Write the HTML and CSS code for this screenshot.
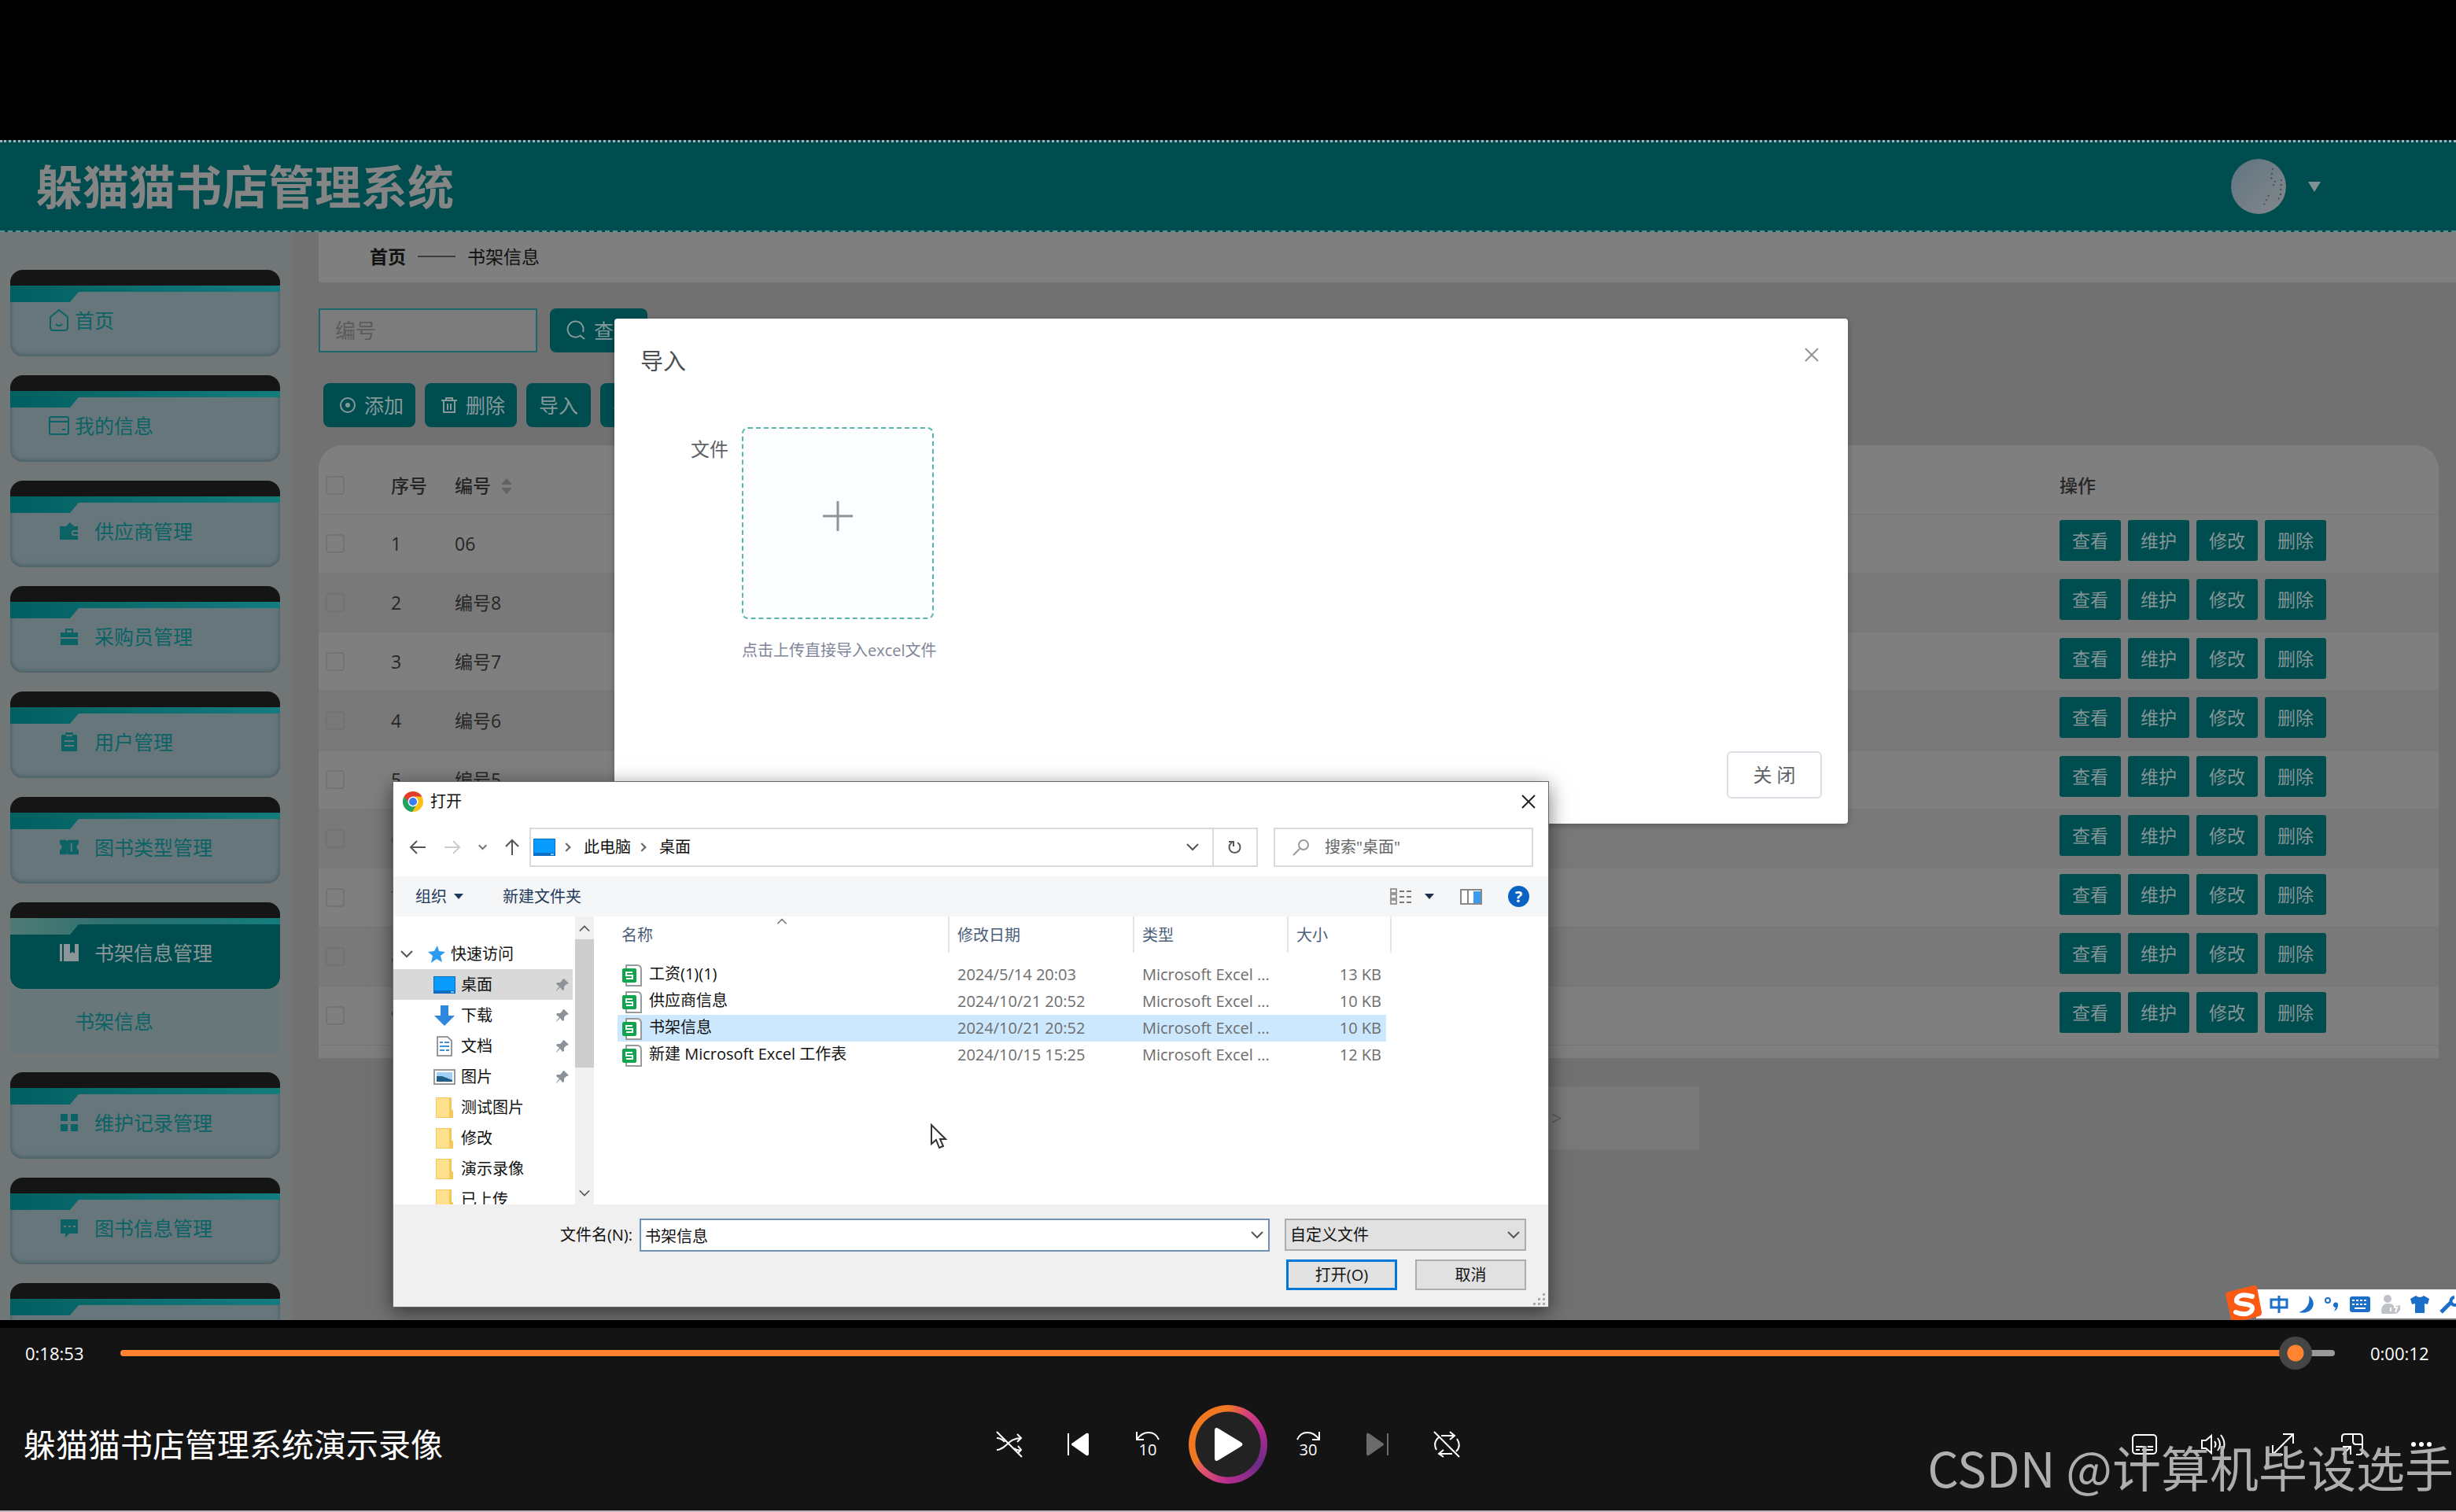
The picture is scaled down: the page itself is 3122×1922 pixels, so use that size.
FILE: index.html
```html
<!DOCTYPE html>
<html lang="zh-CN">
<head>
<meta charset="utf-8">
<title>躲猫猫书店管理系统演示录像</title>
<link rel="stylesheet" href="styles.css">
</head>
<body>
<svg class="defs" aria-hidden="true">
  <symbol id="i-desktop" viewBox="0 0 28 22"><path fill="#0a6fc4" d="M0 0h28v22H0z"/><path fill="#0a9bff" d="M1 1h26v17H1z"/><path fill="#7cc6ff" d="M22 19h4v2h-4z"/></symbol>
  <symbol id="i-pin" viewBox="0 0 18 18"><path fill="#8b929a" d="M11 1l6 6-2 1-1 0-3 3 0 4-2 1-3-4-5 5 0-1 4-5-4-3 1-2 4 0 3-3 0-1z"/></symbol>
  <symbol id="i-folder" viewBox="0 0 24 28"><path fill="#f2c75c" d="M1 1h20v15l2 2v9H1z"/><path fill="#ffe08c" d="M2 2h16v24H2z"/></symbol>
  <symbol id="i-xls" viewBox="0 0 26 28"><path fill="#fff" stroke="#9a9a9a" stroke-width="2" d="M5 1h14q5 0 5 6v20H5z"/><rect y="5" width="18" height="18" rx="2" fill="#12a34f"/><path fill="none" stroke="#fff" stroke-width="2" d="M13 10H5v4h8v4H5"/></symbol>
  <symbol id="i-down" viewBox="0 0 16 10"><path fill="none" stroke="#555" stroke-width="2" d="M1 1l7 7 7-7"/></symbol>
</svg>

<main class="stage">
  <div class="screen">
    <header class="topbar">
      <h1>躲猫猫书店管理系统</h1>
      <button class="account" aria-label="账户">
        <svg width="70" height="70" viewBox="0 0 70 70"><defs><linearGradient id="av" x1="0" y1="0" x2="1" y2="1"><stop offset="0" stop-color="#5f7480"/><stop offset="1" stop-color="#84888c"/></linearGradient></defs><circle cx="35" cy="35" r="35" fill="url(#av)"/><path stroke="#44525c" stroke-width="2" stroke-dasharray="2 4" fill="none" d="M53 12l-2 12 6 6-4 4M64 26l-1 20-4 8M48 46l-6 12"/></svg>
        <svg width="16" height="13" viewBox="0 0 16 13"><path fill="#7f9090" d="M0 0h16L8 13z"/></svg>
      </button>
    </header>

    <div class="app">
      <nav class="sidebar">
        <a class="card top" href="#"><i class="tab"></i><span><svg width="28" height="30" viewBox="0 0 28 30"><path d="M3 11L14 2l11 9v13q0 4-4 4H7q-4 0-4-4zM10 20q4 4 8 0" fill="none" stroke="currentColor" stroke-width="2"/></svg>首页</span></a>
        <a class="card top" href="#"><i class="tab"></i><span><svg width="28" height="26" viewBox="0 0 28 26"><path d="M2 8V4q0-2 2-2h20q2 0 2 2v4M2 8h24v14q0 2-2 2H4q-2 0-2-2zM18 18h4" fill="none" stroke="currentColor" stroke-width="2"/></svg>我的信息</span></a>
        <a class="card" href="#"><i class="tab"></i><span><svg width="24" height="24" viewBox="0 0 24 24"><path fill="currentColor" d="M0 6h8l5-5 5 5h5v5h-6a4 4 0 000 7h6v5H0zM17 13h6v3h-6z"/></svg>供应商管理</span></a>
        <a class="card" href="#"><i class="tab"></i><span><svg width="24" height="24" viewBox="0 0 24 24"><path fill="currentColor" d="M1 7h6V2h10v5h6v6H1zM9 7h6V4H9zM1 15h22v8H1z" fill-rule="evenodd"/></svg>采购员管理</span></a>
        <a class="card" href="#"><i class="tab"></i><span><svg width="24" height="24" viewBox="0 0 24 24"><path fill="currentColor" fill-rule="evenodd" d="M2 3h5V0h10v3h5v21H2zM8 5h8V3H8zM6 10h12v2H6zM6 16h12v2H6z"/></svg>用户管理</span></a>
        <a class="card" href="#"><i class="tab"></i><span><svg width="24" height="22" viewBox="0 0 26 22"><path fill="currentColor" d="M0 1h9l1 2 1-2h15v5a5 5 0 000 9v6H11l-1-2-1 2H0v-6a5 5 0 000-9zM15 5v12h2V5z" fill-rule="evenodd"/></svg>图书类型管理</span></a>
        <div class="group">
          <a class="card active" href="#"><i class="tab"></i><span><svg width="24" height="24" viewBox="0 0 24 24"><path fill="currentColor" d="M0 1h3v22H0zM5 1h8v12l3-2 3 2V1h5v22H5z"/></svg>书架信息管理</span></a>
          <a class="sub" href="#">书架信息</a>
        </div>
        <a class="card" href="#"><i class="tab"></i><span><svg width="24" height="24" viewBox="0 0 24 24"><path fill="currentColor" d="M1 1h9v9H1zM14 1h9v9h-9zM1 14h9v9H1zM14 14h9v9h-9z"/></svg>维护记录管理</span></a>
        <a class="card" href="#"><i class="tab"></i><span><svg width="24" height="24" viewBox="0 0 24 24"><path fill="currentColor" fill-rule="evenodd" d="M1 1h22v18H12l-5 5v-5H1zM5 9h3v2H5zM11 9h3v2h-3zM17 9h3v2h-3z"/></svg>图书信息管理</span></a>
        <a class="card" href="#" aria-label="更多"><i class="tab"></i></a>
      </nav>

      <section class="content">
        <div class="crumbs"><b>首页</b><i></i><span>书架信息</span></div>
        <div class="work">
          <form class="search">
            <input type="text" placeholder="编号" aria-label="编号">
            <button type="button" class="btn query"><svg width="26" height="26" viewBox="0 0 26 26"><path fill="none" stroke="currentColor" stroke-width="2" d="M18 20a10 10 0 114-5M18 19l6 5"/></svg>查询</button>
          </form>
          <div class="actions">
            <button class="btn"><svg width="22" height="22" viewBox="0 0 22 22"><circle cx="11" cy="11" r="9" fill="none" stroke="currentColor" stroke-width="2"/><circle cx="11" cy="11" r="3" fill="currentColor"/></svg>添加</button>
            <button class="btn"><svg width="22" height="22" viewBox="0 0 22 22"><path fill="none" stroke="currentColor" stroke-width="2" d="M1 5h20M7 5V2h8v3M4 5v15h14V5M9 9v8M13 9v8"/></svg>删除</button>
            <button class="btn">导入</button>
            <button class="btn">导出</button>
          </div>
          <div class="panel">
            <table class="grid">
              <colgroup><col class="c1"><col class="c2"><col><col class="c4"></colgroup>
              <thead><tr><th><input type="checkbox" aria-label="全选"></th><th>序号</th><th>编号<svg width="16" height="22" viewBox="0 0 16 22"><path fill="#626262" d="M1 9h14L8 1zM1 13h14l-7 8z"/></svg></th><th>操作</th></tr></thead>
              <tbody id="rows"></tbody>
            </table>
          </div>
          <div class="pager"><button aria-label="下一页">&gt;</button></div>
        </div>
      </section>
    </div>

    <section class="modal" role="dialog" aria-label="导入">
      <div class="modal-head"><h2>导入</h2><button aria-label="关闭"><svg width="18" height="18" viewBox="0 0 18 18"><path stroke="#909399" stroke-width="2" d="M1 1l16 16M17 1L1 17"/></svg></button></div>
      <div class="modal-body">
        <span class="label">文件</span>
        <div class="upload-col">
          <button class="upload" aria-label="上传文件"><svg width="38" height="38" viewBox="0 0 38 38"><path stroke="#8c939d" stroke-width="3" d="M0 19h38M19 0v38"/></svg></button>
          <p>点击上传直接导入excel文件</p>
        </div>
      </div>
      <div class="modal-foot"><button>关 闭</button></div>
    </section>

    <section class="dialog" role="dialog" aria-label="打开">
      <div class="title"><svg width="28" height="28" viewBox="0 0 28 28"><circle cx="14" cy="14" r="13" fill="#fbc116"/><path fill="#e33b2e" d="M2.700 7.500A13 13 0 0125.300 7.500H14L9 17z"/><path fill="#1fa463" d="M2.700 7.500A13 13 0 0013 27l6-10-9 0z"/><circle cx="14" cy="14" r="6.500" fill="#fff"/><circle cx="14" cy="14" r="5" fill="#3b7ded"/></svg><span>打开</span>
        <button aria-label="关闭窗口"><svg width="18" height="18" viewBox="0 0 18 18"><path stroke="#222" stroke-width="2" d="M1 1l16 16M17 1L1 17"/></svg></button></div>
      <div class="navbar">
        <div class="arrows">
          <svg width="22" height="20" viewBox="0 0 22 20"><path fill="none" stroke="#555" stroke-width="2" d="M21 10H2M10 2l-8 8 8 8"/></svg>
          <svg width="22" height="20" viewBox="0 0 22 20"><path fill="none" stroke="#ccc" stroke-width="2" d="M1 10h19M12 2l8 8-8 8"/></svg>
          <svg width="11" height="8" viewBox="0 0 16 10"><path fill="none" stroke="#777" stroke-width="3" d="M1 1l7 7 7-7"/></svg>
          <svg width="20" height="22" viewBox="0 0 20 22"><path fill="none" stroke="#555" stroke-width="2" d="M10 21V2M2 10l8-8 8 8"/></svg>
        </div>
        <div class="address"><svg width="28" height="22"><use href="#i-desktop"/></svg><i class="sep"></i><span>此电脑</span><i class="sep"></i><span>桌面</span><svg class="end" width="16" height="10"><use href="#i-down"/></svg><button aria-label="刷新"><svg width="20" height="20" viewBox="0 0 20 20"><path fill="none" stroke="#555" stroke-width="2" d="M13 4a7 7 0 11-7 0M2 3h6v6"/></svg></button></div>
        <label class="find"><svg width="22" height="22" viewBox="0 0 22 22"><path fill="none" stroke="#999" stroke-width="2" d="M1 21l8-8"/><circle cx="14" cy="8" r="6" fill="none" stroke="#999" stroke-width="2"/></svg><input type="text" placeholder="搜索&quot;桌面&quot;" aria-label="搜索桌面"></label>
      </div>
      <div class="tools">
        <button>组织<svg width="12" height="7" viewBox="0 0 12 7"><path fill="#1e395b" d="M0 0h12L6 7z"/></svg></button><button>新建文件夹</button>
        <div class="right">
          <svg width="28" height="22" viewBox="0 0 28 22"><path fill="none" stroke="#999" stroke-width="2" d="M1 1h7v5H1zM1 8h7v5H1zM1 15h7v5H1z"/><path stroke="#777" stroke-width="2" stroke-dasharray="6 3" d="M12 4h16M12 11h16M12 18h16"/></svg>
          <svg class="tri" width="12" height="7" viewBox="0 0 12 7"><path fill="#1e2f4b" d="M0 0h12L6 7z"/></svg>
          <svg width="28" height="20" viewBox="0 0 28 20"><path fill="#fff" stroke="#888" stroke-width="2" d="M1 1h26v18H1zM10 2v16"/><path fill="#3b9bf0" d="M17 3h9v15h-9z"/></svg>
          <button class="help" aria-label="帮助">?</button>
        </div>
      </div>
      <div class="panes">
        <div class="tree">
          <ul>
            <li class="root"><svg width="16" height="10"><use href="#i-down"/></svg><svg width="22" height="22" viewBox="0 0 22 22"><path fill="#2f9bf0" d="M12 0l2 7 8 1-6 5 2 8-7-4-7 5 2-9-6-5 8-1z"/></svg>快速访问</li>
            <li class="on"><svg width="28" height="22"><use href="#i-desktop"/></svg>桌面<svg class="pin" width="18" height="18"><use href="#i-pin"/></svg></li>
            <li><svg width="28" height="26" viewBox="0 0 28 26"><path fill="#2f86dc" d="M9 0h10v13h8L14 26 1 13h8z"/></svg>下载<svg class="pin" width="18" height="18"><use href="#i-pin"/></svg></li>
            <li><svg width="28" height="26" viewBox="0 0 28 26"><path fill="#fff" stroke="#999" stroke-width="2" d="M5 1h13l5 5v19H5z"/><path stroke="#3b8fd6" stroke-width="2" d="M8 8h4M14 8h6M8 13h12M8 18h6M16 18h4"/></svg>文档<svg class="pin" width="18" height="18"><use href="#i-pin"/></svg></li>
            <li><svg width="28" height="20" viewBox="0 0 28 20"><path fill="#fff" stroke="#999" stroke-width="2" d="M1 1h26v18H1z"/><path fill="#9fd0f5" d="M4 4h20v12H4z"/><path fill="#1f5f86" d="M4 9l7 0 13 5v2H4z"/></svg>图片<svg class="pin" width="18" height="18"><use href="#i-pin"/></svg></li>
            <li><svg width="28" height="28"><use href="#i-folder"/></svg>测试图片</li>
            <li><svg width="28" height="28"><use href="#i-folder"/></svg>修改</li>
            <li><svg width="28" height="28"><use href="#i-folder"/></svg>演示录像</li>
            <li><svg width="28" height="28"><use href="#i-folder"/></svg>已上传</li>
          </ul>
          <div class="bar"><svg class="flip" width="14" height="10"><use href="#i-down"/></svg><i></i><svg width="14" height="10"><use href="#i-down"/></svg></div>
        </div>
        <div class="list">
          <table>
            <colgroup><col class="f1"><col class="f2"><col class="f3"><col class="f4"></colgroup>
            <thead><tr><th>名称<svg class="caret flip" width="14" height="8" viewBox="0 0 16 10"><path fill="none" stroke="#777" stroke-width="2" d="M1 1l7 7 7-7"/></svg></th><th>修改日期</th><th>类型</th><th>大小</th></tr></thead>
            <tbody>
              <tr><td><svg width="26" height="28"><use href="#i-xls"/></svg>工资(1)(1)</td><td>2024/5/14 20:03</td><td>Microsoft Excel ...</td><td>13 KB</td></tr>
              <tr><td><svg width="26" height="28"><use href="#i-xls"/></svg>供应商信息</td><td>2024/10/21 20:52</td><td>Microsoft Excel ...</td><td>10 KB</td></tr>
              <tr class="sel"><td><svg width="26" height="28"><use href="#i-xls"/></svg>书架信息</td><td>2024/10/21 20:52</td><td>Microsoft Excel ...</td><td>10 KB</td></tr>
              <tr><td><svg width="26" height="28"><use href="#i-xls"/></svg>新建 Microsoft Excel 工作表</td><td>2024/10/15 15:25</td><td>Microsoft Excel ...</td><td>12 KB</td></tr>
            </tbody>
          </table>
          <svg class="cursor" width="22" height="34" viewBox="0 0 22 34"><path fill="#fff" stroke="#333" stroke-width="2" d="M2 2v24l6-5 4 10 5-2-4-9h7z"/></svg>
        </div>
      </div>
      <div class="foot">
        <label for="fname">文件名(N):</label>
        <div class="combo"><input id="fname" type="text" value="书架信息"><svg width="16" height="10"><use href="#i-down"/></svg></div>
        <div class="choice">
          <div class="combo gray"><select aria-label="文件类型"><option>自定义文件</option></select><svg width="16" height="10"><use href="#i-down"/></svg></div>
          <div class="pair"><button class="primary">打开(O)</button><button>取消</button></div>
        </div>
        <svg class="grip" width="15" height="15" viewBox="0 0 15 15"><path fill="#aaa" d="M12 0h3v3h-3zM12 6h3v3h-3zM12 12h3v3h-3zM6 6h3v3H6zM6 12h3v3H6zM0 12h3v3H0z"/></svg>
      </div>
    </section>

    <div class="ime">
      <svg class="sogou" width="48" height="48" viewBox="0 0 48 48"><path fill="#fb5a14" d="M5 9L37 1q3-1 4 2l6 32q0 4-3 5L14 48H9L1 13q0-3 4-4z"/><path fill="none" stroke="#fff" stroke-width="6" stroke-linecap="round" d="M35 15Q18 10 15 19c-2 8 22 3 20 12-2 7-12 8-21 4"/></svg>
      <svg width="24" height="24" viewBox="0 0 24 24"><path fill="none" stroke="#1c6fc8" stroke-width="3" d="M2 6h20v10H2zM12 1v22"/></svg>
      <svg width="22" height="24" viewBox="0 0 22 24"><path fill="#1c6fc8" d="M14 1c12 9 4 25-13 21C11 19 16 11 14 1z"/></svg>
      <svg width="20" height="20" viewBox="0 0 20 20"><circle cx="5" cy="5" r="3" fill="none" stroke="#1c6fc8" stroke-width="2"/><path fill="#1c6fc8" d="M12 10a3 3 0 116 1q0 5-5 8 2-4 2-5a3 3 0 01-3-4z"/></svg>
      <svg width="28" height="22" viewBox="0 0 28 22"><rect x="1" y="1" width="26" height="20" rx="3" fill="#1c6fc8"/><path stroke="#fff" stroke-width="2" stroke-dasharray="3 2" d="M4 6h20M4 11h20"/><path stroke="#fff" stroke-width="2" d="M7 16h14"/></svg>
      <svg width="26" height="26" viewBox="0 0 26 26"><g fill="#bfc3c8"><circle cx="9" cy="6" r="5"/><path d="M1 22q0-10 8-10t8 4l8-2v6q-3 5-6 5H2z"/></g><path stroke="#fff" fill="none" stroke-width="2" d="M13 17v5M17 17h4l-2 6"/></svg>
      <svg width="26" height="24" viewBox="0 0 26 24"><path fill="#1c6fc8" d="M8 1q5 4 10 0l7 4-2 7-4-1v12H7V11l-4 1L1 5z"/></svg>
      <svg width="21" height="24" viewBox="0 0 21 24"><path fill="none" stroke="#1c6fc8" stroke-width="5" d="M2 22L14 10"/><path fill="none" stroke="#1c6fc8" stroke-width="4" d="M19 3a5 5 0 105 7"/></svg>
    </div>
  </div>
</main>

<footer class="player">
  <div class="seek"><time>0:18:53</time><input type="range" min="0" max="1145" value="1133" aria-label="播放进度" style="--played:98.4%"><time>0:00:12</time></div>
  <div class="controls">
    <h2>躲猫猫书店管理系统演示录像</h2>
    <div class="buttons">
      <button aria-label="随机"><svg width="34" height="34" viewBox="0 0 34 34"><path d="M1 1l32 32M1 9q6 0 10 5M1 24c12 0 14-15 31-15M27 4l5 5-5 5M23 22q4 3 9 3M28 19l4 5-4 4"/></svg></button>
      <button aria-label="上一个"><svg width="30" height="30" viewBox="0 0 30 30"><path d="M2 1v28"/><path fill="#fff" d="M27 3v24q0 2-2 1L8 16q-2-1 0-2L25 2q2-1 2 1z"/></svg></button>
      <button aria-label="后退10秒" class="skip"><svg width="32" height="14" viewBox="0 0 32 14"><path d="M2 1v10h9M2 11C10-1 25-1 30 11"/></svg><span>10</span></button>
      <button aria-label="播放" class="play"><span><svg width="36" height="42" viewBox="0 0 36 42"><path fill="#fff" stroke="none" d="M0 4q0-6 5-3l28 17q5 3 0 6L5 41q-5 3-5-3z"/></svg></span></button>
      <button aria-label="前进30秒" class="skip"><svg width="32" height="14" viewBox="0 0 32 14"><path d="M30 1v10h-9M30 11C22-1 7-1 2 11"/></svg><span>30</span></button>
      <button aria-label="下一个" class="off"><svg width="30" height="30" viewBox="0 0 30 30"><path d="M28 1v28"/><path fill="#6b6b6b" d="M2 3v24q0 2 2 1l17-12q2-1 0-2L4 2Q2 1 2 3z"/></svg></button>
      <button aria-label="循环"><svg width="34" height="34" viewBox="0 0 34 34"><path d="M1 1l32 32M10 6h16M21 1l6 5-6 5M30 10q6 9-1 16M4 24Q-1 15 7 8M24 29H8M13 24l-6 5 6 4"/></svg></button>
    </div>
    <div class="extra">
      <button aria-label="字幕"><svg width="34" height="26" viewBox="0 0 34 26"><rect x="2" y="1" width="30" height="24" rx="4"/><path d="M6 16h12M21 16h7M6 20h5M14 20h14"/></svg></button>
      <button aria-label="音量"><svg width="34" height="28" viewBox="0 0 34 28"><path d="M2 9h5l7-6v22l-7-6H2zM18 10q3 4 0 8M22 6q6 8 0 16M26 2q9 12 0 24"/></svg></button>
      <button aria-label="全屏"><svg width="30" height="28" viewBox="0 0 30 28"><path d="M2 15v12h13M28 13V1H15M2 27L28 1"/></svg></button>
      <button aria-label="小窗"><svg width="30" height="28" viewBox="0 0 30 28"><path d="M2 11V5q0-4 4-4h18q4 0 4 4v18q0 4-4 4h-4M16 1v9q0 4 4 4h8M3 17h10v10M13 17L3 27"/></svg></button>
      <button aria-label="更多"><svg width="28" height="8" viewBox="0 0 28 8"><g fill="#fff" stroke="none"><circle cx="4" cy="4" r="3"/><circle cx="14" cy="4" r="3"/><circle cx="24" cy="4" r="3"/></g></svg></button>
    </div>
  </div>
  <div class="watermark">CSDN @计算机毕设选手</div>
</footer>
<script src="rows.js"></script>
</body>
</html>
```
FILE: rows.js
```js
const codes = ["06", "编号8", "编号7", "编号6", "编号5", "", "", "", ""];
document.getElementById("rows").innerHTML = codes.map((code, i) =>
  `<tr><td><input type="checkbox" aria-label="选择${i + 1}"></td><td>${i + 1}</td><td>${code}</td>` +
  `<td><div class="ops"><button>查看</button><button>维护</button><button>修改</button><button>删除</button></div></td></tr>`
).join("");
```
FILE: styles.css
```css
* { box-sizing: border-box; }
html, body { margin: 0; height: 100%; }
body {
  display: flex; flex-direction: column; background: #000; overflow: hidden;
  font-family: "Open Sans", "Noto Sans CJK SC", sans-serif; font-size: 20px; line-height: 28px;
}
h1, h2, p, ul { margin: 0; padding: 0; font-weight: 400; list-style: none; }
button, input, select { font: inherit; color: inherit; margin: 0; padding: 0; border: 0; background: none; outline: 0; }
svg { flex: none; }
a { text-decoration: none; color: inherit; }
.defs { position: absolute; width: 0; height: 0; }
.flip { transform: rotate(180deg); }

.stage { flex: 1; min-height: 0; padding: 178px 0 10px; display: flex; }
.screen { position: relative; flex: 1; overflow: hidden; background: #717171; display: flex; flex-direction: column; }

.topbar {
  flex: none; height: 117px; background: #004d50; border-top: 3px dotted #a6b2ba; border-bottom: 2px dashed #5f9092;
  display: flex; align-items: center; justify-content: space-between; padding: 0 172px 0 46px;
}
.topbar h1 { font-size: 59px; line-height: 80px; font-weight: 700; color: #858585; }
.account { display: flex; align-items: center; gap: 28px; }

.app { flex: 1; display: flex; align-items: flex-start; }
.sidebar {
  flex: none; width: 372px; padding: 48px 16px 24px 13px; background: #717777;
  display: flex; flex-direction: column; gap: 24px;
}
.card {
  display: flex; flex-direction: column; height: 110px; border-radius: 16px; overflow: hidden;
  background: #67767b; box-shadow: inset 0 -2px 6px #4a6268, inset 0 0 4px #4a6268; color: #0b6366; font-size: 25px;
}
.card::before { content: ""; flex: none; height: 20px; background: #151516; }
.tab {
  flex: none; height: 21px; background: linear-gradient(90deg, #005f60, #0a6b6d 40%, #147c7d);
  clip-path: polygon(0 0, 100% 0, 100% 8px, 87px 8px, 76px 100%, 0 100%);
}
.card span { display: flex; align-items: center; height: 46px; padding-left: 63px; gap: 20px; }
.card.top span { padding-left: 48px; gap: 6px; }
.card.active { background: #004d50; box-shadow: none; color: #8a9697; }
.card.active .tab { background: linear-gradient(90deg, #4f7a75, #2b7070 40%, #147c7d); }
.sub { display: flex; align-items: center; height: 82px; padding-left: 82px; background: #68777a; color: #0b6366; font-size: 25px; }
.group { display: flex; flex-direction: column; }

.content { flex: 1; padding-left: 33px; color: #262626; font-size: 23px; }
.crumbs { display: flex; align-items: center; gap: 15px; height: 64px; padding: 0 0 2px 65px; background: #7f7f7f; color: #111; }
.crumbs i { width: 48px; height: 2px; background: #3c3c3c; }
.work { padding: 33px 22px 0 0; }
.search { display: flex; gap: 16px; }
.search input { width: 278px; height: 56px; padding-left: 19px; background: #7c7c7c; border: 2px solid #1d6669; font-size: 26px; }
.search input::placeholder { color: #5c5c5c; opacity: 1; }
.btn {
  display: flex; align-items: center; justify-content: center; gap: 10px; height: 56px; padding: 0 16px; border-radius: 8px;
  background: #004d50; color: #85999a; font-size: 25px;
}
.btn:has(svg) { padding: 0 15px 0 20px; }
.btn.query { padding: 0 18px 0 20px; gap: 10px; }
.actions { display: flex; gap: 12px; padding: 39px 0 23px 6px; }
.panel { background: #7f7f7f; border-radius: 30px 30px 0 0; padding-bottom: 16px; overflow: hidden; }
.grid { width: 100%; border-collapse: collapse; table-layout: fixed; }
.grid .c1 { width: 92px; } .grid .c2 { width: 81px; } .grid .c4 { width: 482px; }
.grid th, .grid td { padding: 0; text-align: left; height: 75px; border-bottom: 1px solid #767676; }
.grid th { height: 87px; padding-top: 16px; font-weight: 500; }
.grid th svg { margin-left: 12px; vertical-align: -3px; }
.grid th:first-child, .grid td:first-child { padding-left: 9px; }
.grid tbody tr:nth-child(even) { background: #797979; }
.grid input { appearance: none; display: block; width: 24px; height: 24px; border: 2px solid #737373; border-radius: 4px; }
.ops { display: flex; gap: 9px; padding-bottom: 7px; }
.ops button { width: 78px; height: 52px; border-radius: 3px; background: #004d50; color: #859596; }
.pager { width: 814px; height: 80px; margin: 36px auto 0; background: #797979; display: flex; justify-content: flex-end; align-items: center; padding-right: 174px; color: #5a5a5a; }

.modal { position: absolute; top: 227px; left: 781px; right: 773px; height: 642px; background: #fff; border-radius: 4px; box-shadow: 0 2px 8px #0004; display: flex; flex-direction: column; font-size: 24px; color: #606266; }
.modal-head { display: flex; justify-content: space-between; align-items: center; padding: 34px 37px 0 33px; height: 74px; }
.modal-head h2 { font-size: 29px; line-height: 44px; color: #4c4f54; }
.modal-head button { height: 34px; display: flex; align-items: flex-start; }
.modal-body { flex: 1; display: flex; gap: 17px; padding: 64px 0 0 97px; }
.label { padding-top: 14px; }
.upload { display: flex; align-items: center; justify-content: center; width: 244px; height: 244px; padding-bottom: 18px; border: 2px dashed #5bb5ac; border-radius: 8px; background: #fbfdff; }
.upload-col p { margin-top: 26px; font-size: 20px; color: #7f869a; }
.modal-foot { display: flex; justify-content: flex-end; padding: 0 33px 32px 0; }
.modal-foot button { width: 121px; height: 60px; border: 2px solid #dcdfe6; border-radius: 6px; }

.dialog { position: absolute; left: 499px; top: 815px; width: 1470px; height: 669px; border: 1px solid #6a6a6a; background: #fff; box-shadow: 0 6px 24px #0008; display: flex; flex-direction: column; color: #111; }
.title { display: flex; align-items: center; gap: 8px; height: 50px; padding: 0 16px 0 11px; }
.title button { margin-left: auto; display: flex; }
.navbar { display: flex; height: 70px; padding: 8px 19px 12px 0; }
.arrows { display: flex; align-items: center; justify-content: space-between; width: 173px; padding: 0 12px 0 20px; }
.address { flex: 1; display: flex; align-items: center; height: 50px; padding-left: 3px; border: 2px solid #d9d9d9; }
.address .sep { width: 8px; height: 8px; margin: 0 18px 0 10px; border: solid #666; border-width: 2px 2px 0 0; transform: rotate(45deg); }
.address .end { margin-left: auto; margin-right: 17px; }
.address button { width: 56px; height: 46px; border-left: 2px solid #d9d9d9; display: flex; align-items: center; justify-content: center; }
.find { display: flex; align-items: center; gap: 19px; width: 330px; height: 50px; margin-left: 20px; padding-left: 22px; border: 2px solid #d9d9d9; }
.find input { width: 240px; }
.find input::placeholder { color: #666; opacity: 1; }
.tools { display: flex; align-items: center; gap: 50px; height: 51px; padding: 0 24px 0 28px; background: #f4f6f7; color: #1e395b; }
.tools > button { display: flex; align-items: center; gap: 9px; }
.tools .right { margin-left: auto; display: flex; align-items: center; gap: 33px; }
.tools .tri { margin-left: -17px; }
.help { width: 27px; height: 27px; border-radius: 50%; background: #0a62c4; color: #fff; font-weight: 700; line-height: 27px; text-align: center; }
.panes { flex: 1; min-height: 0; display: flex; }
.tree { width: 255px; display: flex; justify-content: space-between; overflow: hidden; }
.tree ul { width: 228px; padding-top: 28px; }
.tree li { display: flex; align-items: center; gap: 7px; height: 39px; padding: 0 4px 0 51px; }
.tree li.root { padding-left: 9px; }
.tree li.root svg:first-child { margin-right: 12px; }
.tree .on { background: #d9d9d9; }
.tree .pin { margin-left: auto; }
.bar { width: 24px; background: #f0f0f0; display: flex; flex-direction: column; align-items: center; padding: 10px 0 9px; }
.bar i { width: 24px; height: 163px; margin: 9px 0 auto; background: #cdcdcd; }
.list { position: relative; flex: 1; padding-left: 30px; }
.list table { width: 983px; border-collapse: collapse; table-layout: fixed; color: #6d6d6d; }
.f1 { width: 421px; } .f2 { width: 235px; } .f3 { width: 196px; } .f4 { width: 131px; }
.list th { position: relative; height: 46px; padding: 2px 0 0 10px; border-right: 2px solid #e5e5e5; text-align: left; font-weight: 400; color: #4c607a; }
.list th:first-child { padding-left: 5px; }
.caret { position: absolute; left: 202px; top: 2px; }
.list tbody::before { content: ""; display: block; height: 11px; }
.list td { height: 34px; padding: 0 0 0 11px; white-space: nowrap; }
.list td:first-child { padding-left: 6px; color: #111; }
.list td:last-child { text-align: right; padding-right: 12px; }
.list td svg { margin-right: 8px; vertical-align: middle; }
.sel { background: linear-gradient(#cce8ff, #cce8ff) no-repeat 0 0 / calc(100% - 6px) 100%; }
.cursor { position: absolute; left: 427px; top: 263px; }
.foot { position: relative; display: flex; height: 130px; padding: 18px 28px 0 0; background: #f0f0f0; }
.foot label { width: 313px; padding-right: 9px; line-height: 42px; text-align: right; }
.combo { flex: 1; position: relative; height: 42px; background: #fff; border: 2px solid #7093b5; display: flex; align-items: center; }
.combo input, .combo select { flex: 1; height: 38px; padding-left: 5px; appearance: none; }
.combo svg { position: absolute; right: 6px; pointer-events: none; }
.choice { width: 307px; margin-left: 19px; display: flex; flex-direction: column; gap: 11px; }
.combo.gray { flex: none; height: 41px; background: #e1e1e1; border-color: #adadad; }
.pair { display: flex; justify-content: space-between; padding-left: 2px; }
.pair button { width: 141px; height: 39px; background: #e1e1e1; border: 2px solid #adadad; }
.pair .primary { border: 3px solid #0078d7; }
.grip { position: absolute; right: 4px; bottom: 2px; }

.ime { position: absolute; right: 0; bottom: 2px; height: 37px; width: 254px; background: #fff; display: flex; align-items: center; justify-content: space-between; padding-left: 17px; }
.sogou { position: absolute; left: -40px; top: -6px; }

.player { position: relative; flex: none; background: #141414; color: #fff; border-bottom: 2px solid #bfb5bb; }
.seek { display: flex; align-items: center; height: 64px; padding: 0 33px 0 32px; font-size: 22px; }
.seek time { width: 76px; }
.seek input { flex: 1; appearance: none; height: 40px; margin: 0 45px; }
.seek input::-webkit-slider-runnable-track { height: 8px; border-radius: 4px; background: linear-gradient(90deg, #ff8331 var(--played), #999 var(--played)); }
.seek input::-webkit-slider-thumb { appearance: none; width: 42px; height: 42px; margin-top: -17px; border-radius: 50%; background: radial-gradient(circle, #ff8331 10px, #454545 11px); }
.controls { display: flex; align-items: center; height: 168px; }
.controls h2 { flex: 1; text-indent: 30px; font-size: 41px; line-height: 56px; }
.controls button { width: 88px; height: 100px; display: flex; align-items: center; justify-content: center; }
.controls svg { fill: none; stroke: #fff; stroke-width: 2; }
.buttons { display: flex; }
.controls .skip { flex-direction: column; font-size: 20px; line-height: 20px; }
.controls .play { width: 116px; }
.play span { display: flex; align-items: center; justify-content: center; width: 100px; height: 100px; padding-left: 2px; border-radius: 50%; background: radial-gradient(circle, #222 41px, transparent 42px), conic-gradient(#f07820, #d8437a 30deg, #b52b8f 65deg, #6a2c86 120deg, #b52b8f 180deg, #e0566a 225deg, #f07820 245deg, #f07820); }
.controls .off svg { stroke: #6b6b6b; }
.extra { flex: 1; display: flex; justify-content: flex-end; }
.watermark { position: absolute; right: 3px; bottom: 14px; font-family: "Noto Sans CJK SC", sans-serif; font-size: 62px; line-height: 84px; color: #b8b8b8f0; white-space: nowrap; }
```
